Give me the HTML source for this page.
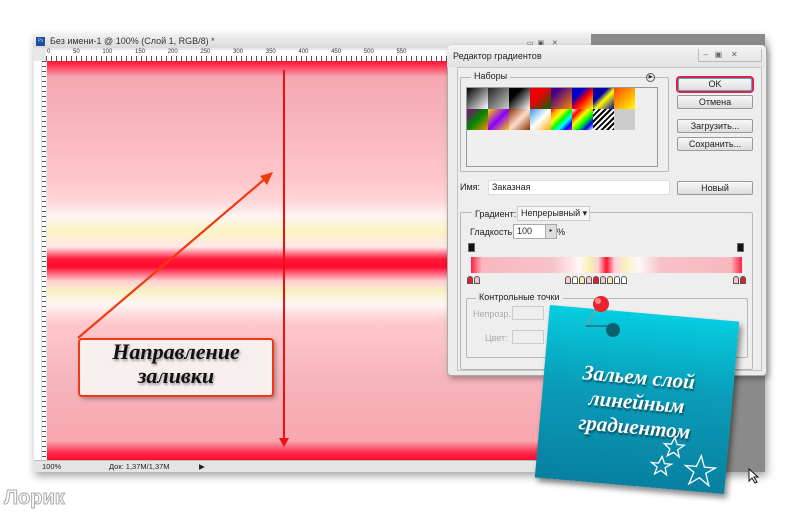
<!DOCTYPE html><html><head><meta charset="utf-8"><style>
body{margin:0;width:800px;height:512px;background:#fff;position:relative;overflow:hidden;font-family:"Liberation Sans",sans-serif;font-size:9px;color:#222}
.a{position:absolute}
.btn{position:absolute;background:linear-gradient(#f8f8f8,#dcdcdc);border:1px solid #9a9a9a;border-radius:2px;text-align:center;font-size:9px;line-height:12px}
.grp{position:absolute;border:1px solid #b8b8b8;border-radius:2px}
.gl{position:absolute;background:#ececec;padding:0 3px;font-size:9px}
.st{position:absolute;top:276px;width:6px;height:8px;border:1px solid #555;border-top-left-radius:3px;border-top-right-radius:3px;box-sizing:border-box}
</style></head><body>
<div class="a" style="left:33px;top:34px;width:732px;height:438px;background:#8a8a8a;box-shadow:2px 4px 8px rgba(0,0,0,.35)"></div>
<div class="a" style="left:33px;top:34px;width:558px;height:14px;background:linear-gradient(#f2f2f2,#dadada)"></div>
<div class="a" style="left:36px;top:37px;width:9px;height:9px;background:#1d4f9a;color:#9cf;font-size:5px;line-height:9px;text-align:center">Ps</div>
<div class="a" style="left:50px;top:36px;font-size:9px;color:#333">Без имени-1 @ 100% (Слой 1, RGB/8) *</div>
<div class="a" style="left:525px;top:39px;width:60px;height:9px;color:#555;font-size:7px">&nbsp;▭&nbsp;&nbsp;▣&nbsp;&nbsp;&nbsp;&nbsp;✕</div>
<div class="a" style="left:33px;top:48px;width:558px;height:424px;background:#e8e8e8"></div>
<div class="a" style="left:46px;top:50px;width:545px;height:11px;background:repeating-linear-gradient(90deg,#555 0 1px,#fff 1px 5px);border-bottom:1px solid #999;"></div>
<div class="a" style="left:46px;top:50px;width:545px;height:6px;background:#fff"></div>
<div class="a" style="left:47px;top:49px;font-size:6px;word-spacing:21px;color:#333;white-space:nowrap">0 50 100 150 200 250 300 350 400 450 500 550</div>
<div class="a" style="left:34px;top:61px;width:12px;height:399px;background:repeating-linear-gradient(180deg,#555 0 1px,#fff 1px 5px)"></div>
<div class="a" style="left:34px;top:61px;width:7px;height:399px;background:#fff;border-right:1px solid #ddd"></div>
<div class="a" style="left:47px;top:61px;width:544px;height:399px;background:linear-gradient(#ff1434 0px,#ff3050 4px,#f6a8b2 16px,#f7b4bc 60px,#ffc6ca 118px,#ffd6d8 140px,#fff4f4 155px,#fbf4c4 170px,#ffe8e8 186px,#ff1838 198px,#ff0a30 206px,#ffd0d4 220px,#f9f2c4 230px,#fff6f6 243px,#ffc8cc 262px,#f6b4bc 320px,#f8a6b0 380px,#ff2848 392px,#ff0a2c 399px)"></div>
<div class="a" style="left:34px;top:460px;width:557px;height:11px;background:#e4e4e4;border-top:1px solid #bbb;font-size:7.5px;line-height:11px">
<span class="a" style="left:8px">100%</span><span class="a" style="left:75px">Док: 1,37M/1,37M</span><span class="a" style="left:165px">▶</span></div>
<svg class="a" style="left:0;top:0" width="800" height="512">
<line x1="284" y1="70" x2="284" y2="440" stroke="#ee1010" stroke-width="2"/>
<polygon points="279,438 289,438 284,447" fill="#ee1010"/>
<line x1="78" y1="338" x2="266" y2="178" stroke="#f03a10" stroke-width="2.2"/>
<polygon points="273,172 260,176 267,185" fill="#f03a10"/>
</svg>
<div class="a" style="left:78px;top:338px;width:192px;height:55px;background:#f7eeee;border:2px solid #f03a10;border-radius:4px;box-shadow:2px 2px 4px rgba(0,0,0,.3);text-align:center;font:italic bold 22px/24px 'Liberation Serif',serif;color:#111;text-shadow:1px 2px 2px rgba(0,0,0,.35)">Направление<br>заливки</div>
<div class="a" style="left:447px;top:45px;width:318px;height:329px;background:#ececec;border:1px solid #aaa;border-radius:4px;box-shadow:2px 3px 6px rgba(0,0,0,.3)"></div>
<div class="a" style="left:447px;top:45px;width:318px;height:22px;background:linear-gradient(#f4f4f4,#e2e2e2);border-radius:4px 4px 0 0"></div>
<div class="a" style="left:453px;top:51px;font-size:9px">Редактор градиентов</div>
<div class="a" style="left:698px;top:49px;width:62px;height:12px;border:1px solid #bbb;border-top:0;color:#666;font-size:8px;line-height:12px">&nbsp;&nbsp;–&nbsp;&nbsp;&nbsp;▣&nbsp;&nbsp;&nbsp;&nbsp;✕</div>
<div class="a" style="left:457px;top:67px;width:303px;height:302px;border:1px solid #c4c4c4;background:#eee"></div>
<div class="grp" style="left:460px;top:77px;width:207px;height:93px"></div>
<div class="gl" style="left:471px;top:71px">Наборы</div>
<div class="a" style="left:646px;top:73px;width:7px;height:7px;border:1px solid #555;border-radius:50%;font-size:5px;line-height:7px;text-align:center">▶</div>
<div class="a" style="left:466px;top:87px;width:190px;height:78px;background:#efefef;border:1px solid #999"></div>
<div class="a" style="left:467px;top:88px;width:172px;height:42px;display:grid;grid-template-columns:repeat(8,21px);grid-template-rows:21px 21px">
<div style="background:linear-gradient(135deg,#000,#fff)"></div><div style="background:linear-gradient(135deg,#222,#ccc)"></div><div style="background:linear-gradient(135deg,#000 30%,#fff)"></div><div style="background:linear-gradient(135deg,#e00 40%,#060)"></div><div style="background:linear-gradient(135deg,#408 20%,#f80)"></div><div style="background:linear-gradient(135deg,#00c 30%,#f00 55%,#ff0)"></div><div style="background:linear-gradient(135deg,#00a 35%,#ff0 55%,#00a)"></div><div style="background:linear-gradient(135deg,#f40,#ff0)"></div>
<div style="background:linear-gradient(135deg,#808,#080 50%,#f80)"></div><div style="background:linear-gradient(135deg,#fc0,#80f 50%,#fc0)"></div><div style="background:linear-gradient(135deg,#830,#fdc 50%,#830)"></div><div style="background:linear-gradient(135deg,#39e,#fff 50%,#fa0)"></div><div style="background:linear-gradient(135deg,red,orange,yellow,lime,cyan,blue,magenta)"></div><div style="background:linear-gradient(135deg,#fff,red,yellow,lime,blue,#fff)"></div><div style="background:repeating-linear-gradient(135deg,#000 0 2px,#fff 2px 4px)"></div><div style="background:#ccc"></div></div>
<div class="btn" style="left:676px;top:76px;width:74px;height:13px;border:2px solid #e0204a;border-radius:4px;box-shadow:inset 0 0 0 1px #5ab">OK</div>
<div class="btn" style="left:677px;top:95px;width:74px">Отмена</div>
<div class="btn" style="left:677px;top:119px;width:74px">Загрузить...</div>
<div class="btn" style="left:677px;top:137px;width:74px">Сохранить...</div>
<div class="a" style="left:460px;top:182px">Имя:</div>
<div class="a" style="left:488px;top:180px;width:177px;height:13px;background:#fff;border:1px solid #ddd;padding-left:3px;line-height:13px">Заказная</div>
<div class="btn" style="left:677px;top:181px;width:74px">Новый</div>
<div class="grp" style="left:460px;top:212px;width:291px;height:156px"></div>
<div class="gl" style="left:472px;top:209px">Градиент:</div>
<div class="a" style="left:517px;top:206px;width:68px;height:13px;background:#f6f6f6;border:1px solid #ccc;line-height:13px;padding-left:3px">Непрерывный ▾</div>
<div class="a" style="left:470px;top:227px">Гладкость:</div>
<div class="a" style="left:513px;top:224px;width:39px;height:13px;background:#fff;border:1px solid #aaa;line-height:13px;padding-left:3px">100<span style="position:absolute;right:0;width:10px;border-left:1px solid #aaa;background:#ddd;font-size:6px;text-align:center">▸</span></div>
<div class="a" style="left:557px;top:227px">%</div>
<div class="a" style="left:468px;top:243px;width:5px;height:7px;background:#111;border:1px solid #666"></div>
<div class="a" style="left:737px;top:243px;width:5px;height:7px;background:#111;border:1px solid #666"></div>
<div class="a" style="left:471px;top:257px;width:271px;height:16px;background:linear-gradient(90deg,#ff2040,#f8b8c0 4%,#f7c2c8 30%,#fff8f8 40%,#f7f0b0 44%,#ffd0d8 47%,#ff1030 50%,#ffd0d8 53%,#f8f2c0 57%,#fff8f8 62%,#f7c2c8 70%,#f8b8c0 96%,#ff2040)"></div>
<div class="st" style="left:467px;background:#e02030"></div><div class="st" style="left:474px;background:#f8c0c8"></div>
<div class="st" style="left:565px;background:#f8c8cc"></div><div class="st" style="left:572px;background:#fff"></div><div class="st" style="left:579px;background:#f4eeb0"></div><div class="st" style="left:586px;background:#f8c8cc"></div><div class="st" style="left:593px;background:#e02030"></div><div class="st" style="left:600px;background:#f8c8cc"></div><div class="st" style="left:607px;background:#f4eeb0"></div><div class="st" style="left:614px;background:#fff"></div><div class="st" style="left:621px;background:#fff"></div>
<div class="st" style="left:733px;background:#f8c0c8"></div><div class="st" style="left:740px;background:#e02030"></div>
<div class="grp" style="left:466px;top:298px;width:280px;height:58px"></div>
<div class="gl" style="left:476px;top:292px">Контрольные точки</div>
<div class="a" style="left:473px;top:309px;color:#aaa">Непрозр.:</div>
<div class="a" style="left:512px;top:306px;width:30px;height:12px;border:1px solid #ccc"></div>
<div class="a" style="left:485px;top:333px;color:#aaa">Цвет:</div>
<div class="a" style="left:512px;top:330px;width:30px;height:12px;border:1px solid #ccc"></div>
<div class="a" style="left:542px;top:313px;width:190px;height:173px;transform:rotate(5deg);background:linear-gradient(#06cde0,#0a9cb8 45%,#0880a0);box-shadow:3px 4px 6px rgba(0,0,0,.45);text-align:center;font:italic bold 21px/25px 'Liberation Serif',serif;color:#fff;text-shadow:1px 2px 2px rgba(0,0,0,.5)"><div style="padding-top:52px">Зальем слой<br>линейным<br>градиентом</div>
<svg style="position:absolute;right:8px;bottom:4px" width="70" height="50" viewBox="0 0 70 50" fill="none" stroke="#fff" stroke-width="1.3"><polygon points="24,2 27,9 34,9 28,14 30,21 24,17 18,21 20,14 14,9 21,9"/><polygon points="13,22 16,29 23,29 17,33 19,40 13,36 7,40 9,33 3,29 10,29"/><polygon points="52,18 56,29 67,29 58,35 62,47 52,40 42,47 46,35 37,29 48,29"/></svg></div>
<svg class="a" style="left:580px;top:290px" width="50" height="50"><line x1="20" y1="12" x2="6" y2="36" stroke="#b88" stroke-width="1"/><line x1="6" y1="36" x2="30" y2="36" stroke="#345" stroke-width="1"/><circle cx="33" cy="40" r="7" fill="#086070"/><circle cx="21" cy="14" r="8" fill="#e82030"/><circle cx="18" cy="11" r="3" fill="#f88"/></svg>
<svg class="a" style="left:748px;top:468px" width="12" height="16"><polygon points="1,1 1,13 4,10 7,15 9,14 6,9 10,9" fill="#fff" stroke="#111"/></svg>
<div class="a" style="left:4px;top:487px;font:bold 20px 'Liberation Sans',sans-serif;color:#fff;-webkit-text-stroke:1px #aaa">Лорик</div>
</body></html>
